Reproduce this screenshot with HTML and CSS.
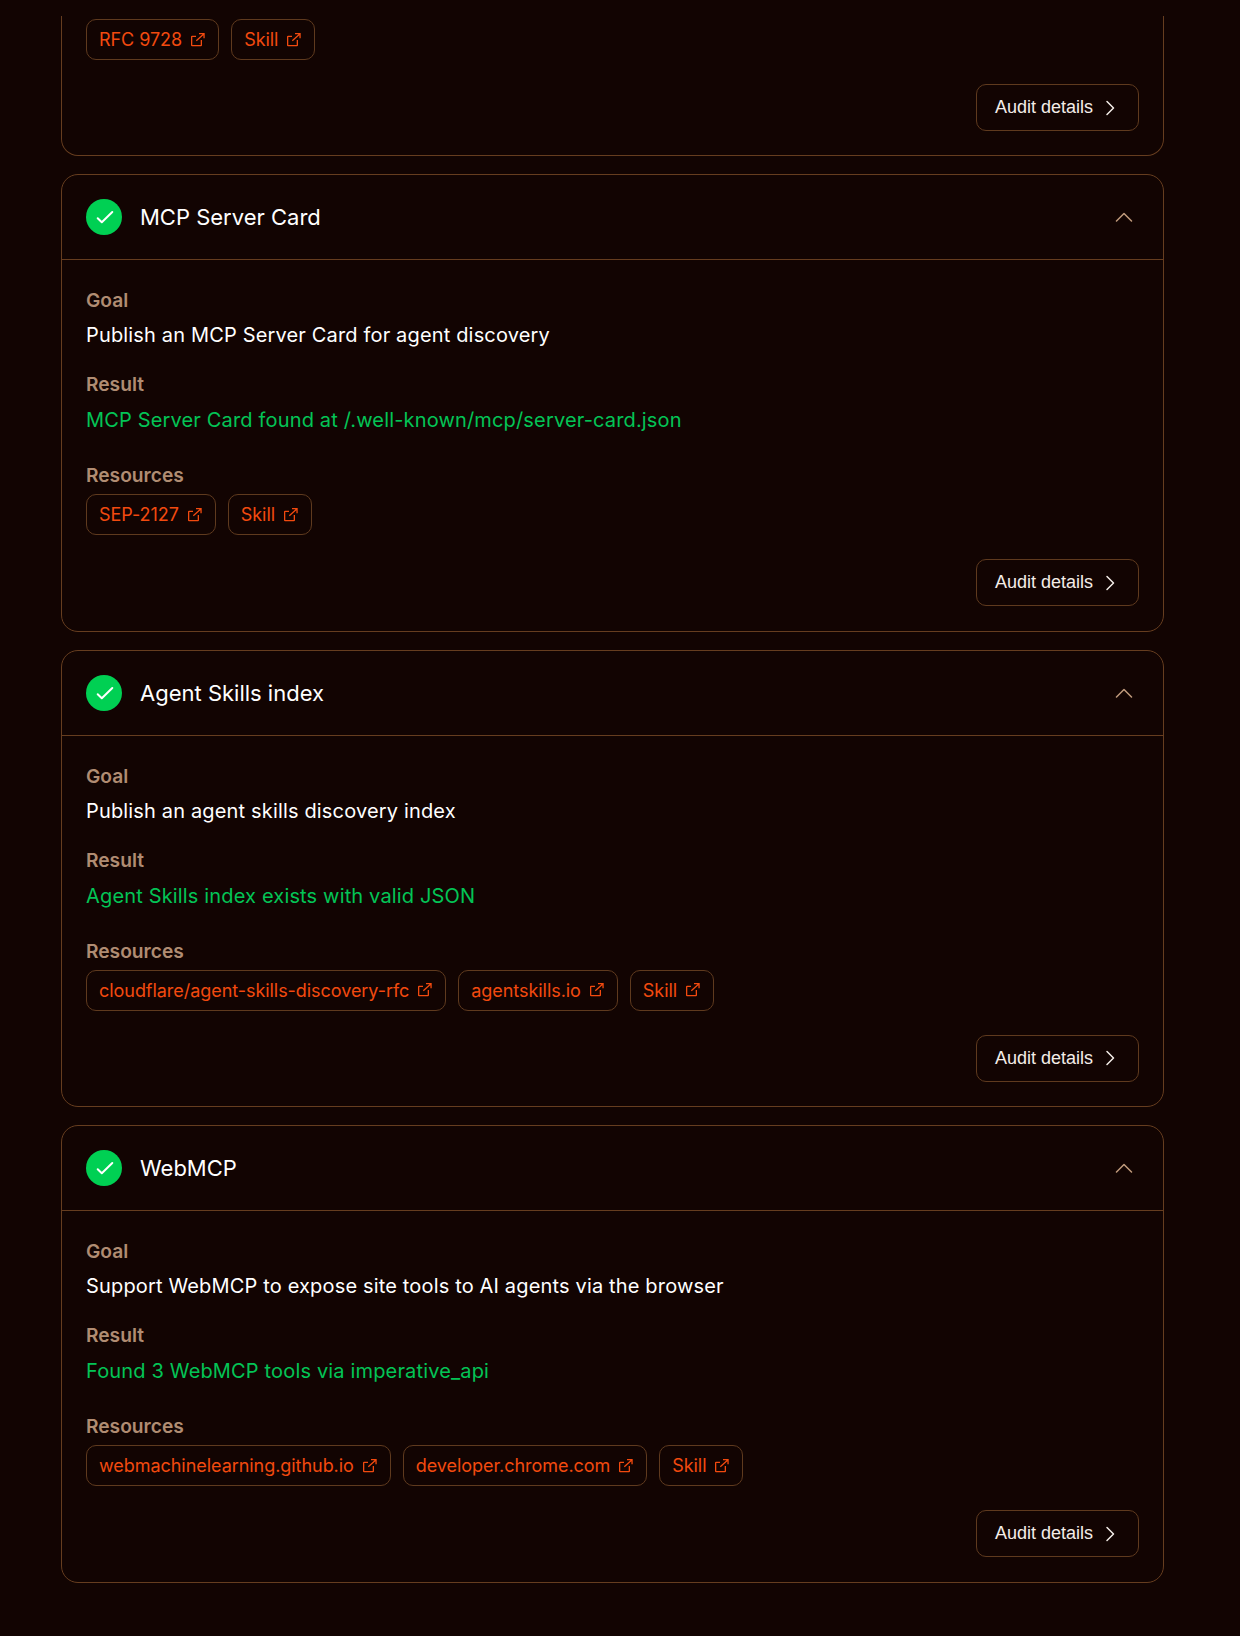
FILE: index.html
```html
<!DOCTYPE html>
<html lang="en">
<head>
  <meta charset="UTF-8" />
  <meta name="viewport" content="width=device-width, initial-scale=1.0" />
  <title>Audit results</title>
  <link rel="stylesheet" href="styles.css">
</head>
<body>
  <svg class="sprites" width="0" height="0" aria-hidden="true">
    <symbol id="icon-external" viewBox="0 0 16 16">
      <path d="M6 4.350H2.150a.5.5 0 0 0-.5.5v8.300a.5.5 0 0 0 .5.5h8.700a.5.5 0 0 0 .5-.5V8" fill="none" stroke="currentColor" stroke-width="1.300"/>
      <path d="M6.300 8.700 14.050 1.650M9 1.650h5.050v4.650" fill="none" stroke="currentColor" stroke-width="1.300"/>
    </symbol>
    <symbol id="icon-check" viewBox="0 0 36 36">
      <path d="M11.700 19.300 15.800 23.300 26.300 13" fill="none" stroke="#fff" stroke-width="2" stroke-linecap="round" stroke-linejoin="round"/>
    </symbol>
    <symbol id="icon-right" viewBox="0 0 12 18">
      <path d="M2 2.500 8.500 9 2 15.500" fill="none" stroke="currentColor" stroke-width="1.500" stroke-linecap="round" stroke-linejoin="round"/>
    </symbol>
    <symbol id="icon-up" viewBox="0 0 18 10">
      <path d="M1.500 9 9 1.500 16.500 9" fill="none" stroke="currentColor" stroke-width="1.500" stroke-linecap="round" stroke-linejoin="round"/>
    </symbol>
  </svg>

  <div class="results">
    <section class="card card-cut">
      <div class="card-body">
        <div class="chips">
          <a class="chip">RFC 9728 <svg class="ext"><use href="#icon-external"/></svg></a>
          <a class="chip">Skill <svg class="ext"><use href="#icon-external"/></svg></a>
        </div>
        <div class="card-foot">
          <button class="audit-btn">Audit details <svg class="right"><use href="#icon-right"/></svg></button>
        </div>
      </div>
    </section>

    <section class="card">
      <div class="card-head">
        <span class="status"><svg><use href="#icon-check"/></svg></span>
        <h3>MCP Server Card</h3>
        <svg class="up"><use href="#icon-up"/></svg>
      </div>
      <div class="card-body">
        <div class="label">Goal</div>
        <p class="goal">Publish an MCP Server Card for agent discovery</p>
        <div class="label">Result</div>
        <p class="result">MCP Server Card found at /.well-known/mcp/server-card.json</p>
        <div class="label">Resources</div>
        <div class="chips">
          <a class="chip">SEP-2127 <svg class="ext"><use href="#icon-external"/></svg></a>
          <a class="chip">Skill <svg class="ext"><use href="#icon-external"/></svg></a>
        </div>
        <div class="card-foot">
          <button class="audit-btn">Audit details <svg class="right"><use href="#icon-right"/></svg></button>
        </div>
      </div>
    </section>

    <section class="card">
      <div class="card-head">
        <span class="status"><svg><use href="#icon-check"/></svg></span>
        <h3>Agent Skills index</h3>
        <svg class="up"><use href="#icon-up"/></svg>
      </div>
      <div class="card-body">
        <div class="label">Goal</div>
        <p class="goal">Publish an agent skills discovery index</p>
        <div class="label">Result</div>
        <p class="result">Agent Skills index exists with valid JSON</p>
        <div class="label">Resources</div>
        <div class="chips">
          <a class="chip">cloudflare/agent-skills-discovery-rfc <svg class="ext"><use href="#icon-external"/></svg></a>
          <a class="chip">agentskills.io <svg class="ext"><use href="#icon-external"/></svg></a>
          <a class="chip">Skill <svg class="ext"><use href="#icon-external"/></svg></a>
        </div>
        <div class="card-foot">
          <button class="audit-btn">Audit details <svg class="right"><use href="#icon-right"/></svg></button>
        </div>
      </div>
    </section>

    <section class="card">
      <div class="card-head">
        <span class="status"><svg><use href="#icon-check"/></svg></span>
        <h3>WebMCP</h3>
        <svg class="up"><use href="#icon-up"/></svg>
      </div>
      <div class="card-body">
        <div class="label">Goal</div>
        <p class="goal">Support WebMCP to expose site tools to AI agents via the browser</p>
        <div class="label">Result</div>
        <p class="result">Found 3 WebMCP tools via imperative_api</p>
        <div class="label">Resources</div>
        <div class="chips">
          <a class="chip">webmachinelearning.github.io <svg class="ext"><use href="#icon-external"/></svg></a>
          <a class="chip">developer.chrome.com <svg class="ext"><use href="#icon-external"/></svg></a>
          <a class="chip">Skill <svg class="ext"><use href="#icon-external"/></svg></a>
        </div>
        <div class="card-foot">
          <button class="audit-btn">Audit details <svg class="right"><use href="#icon-right"/></svg></button>
        </div>
      </div>
    </section>
  </div>
</body>
</html>
```

FILE: styles.css
```css
html, body {
  height: 100%;
  overflow: hidden;
}
body {
  margin: 0;
  font-family: Inter, "Liberation Sans", sans-serif;
  background: #120402;
  color: #fff;
}
.sprites {
  display: block;
  height: 0;
}
.results {
  margin: 16px 76px 0 61px;
  height: 1620px;
  overflow: hidden;
  display: flex;
  flex-direction: column;
  gap: 18px;
}
.card {
  flex: none;
  border: 1px solid #663d1f;
  border-radius: 17px;
}
.card-cut {
  border-top: none;
  border-radius: 0 0 17px 17px;
}
.card-cut .card-body {
  padding: 3px 24px 24px;
}
.card-cut .chips {
  margin-top: 0;
}
.card-head {
  display: flex;
  align-items: center;
  gap: 18px;
  height: 84px;
  padding: 0 24px;
  border-bottom: 1px solid #663d1f;
}
.card-head h3 {
  flex: 1;
  margin: 0;
  font-size: 22px;
  font-weight: 420;
}
.status {
  width: 36px;
  height: 36px;
  border-radius: 50%;
  background: #00d053;
}
.status svg {
  display: block;
  width: 36px;
  height: 36px;
}
.up {
  width: 18px;
  height: 10px;
  margin-right: 6px;
  color: #c09a7c;
}
.card-body {
  padding: 27px 24px 24.5px;
}
.label {
  font-size: 19.2px;
  line-height: 26px;
  font-weight: 600;
  color: #b08c72;
}
.goal,
.result {
  margin: 0;
  font-size: 20px;
  line-height: 30px;
  letter-spacing: 0.16px;
}
.goal {
  margin: 7px 0 21px;
}
.result {
  margin: 8px 0 27px;
  color: #03c456;
}
.chips {
  display: flex;
  gap: 12px;
  margin-top: 6px;
}
.chip {
  display: flex;
  align-items: center;
  gap: 8px;
  height: 41px;
  box-sizing: border-box;
  padding: 0 12px;
  border: 1px solid #5f3a1e;
  border-radius: 10px;
  font-size: 18px;
  letter-spacing: -0.05px;
  color: #f24a0f;
}
.ext {
  width: 16px;
  height: 16px;
}
.card-foot {
  display: flex;
  justify-content: flex-end;
  margin-top: 24px;
}
.audit-btn {
  display: flex;
  align-items: center;
  gap: 12px;
  height: 47px;
  padding: 0 21px 0 18px;
  background: none;
  border: 1px solid #5f3a1e;
  border-radius: 10px;
  font-family: "Liberation Sans", Arial, sans-serif;
  font-size: 18px;
  color: #f4ede8;
}
.right {
  width: 12px;
  height: 18px;
}
```
